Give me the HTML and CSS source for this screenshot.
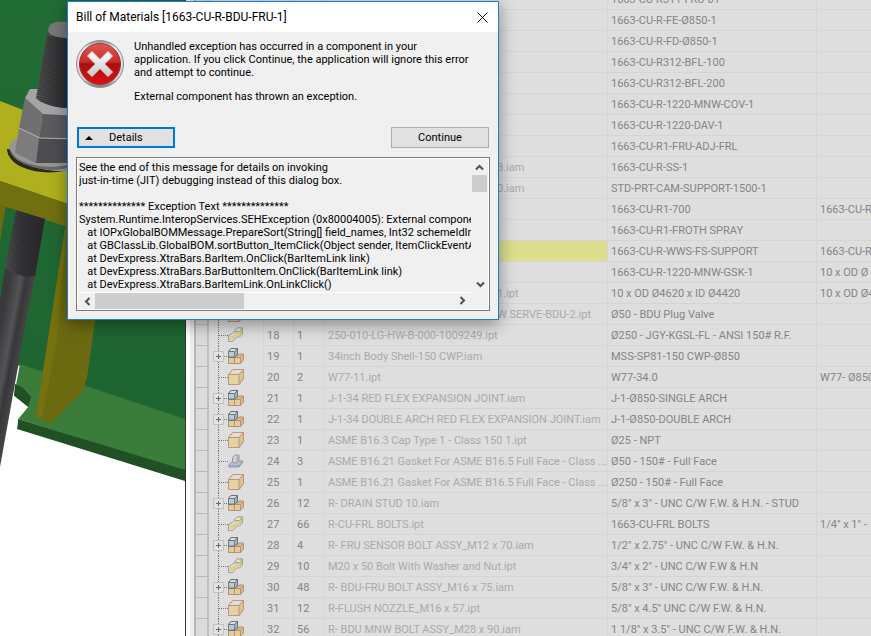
FILE: index.html
```html
<!DOCTYPE html>
<html lang="en">
<head>
    <meta charset="UTF-8">
    <title>Bill of Materials</title>
    <link rel="stylesheet" href="styles.css">
</head>

<body>

<!-- Tree icons -->
<svg class="sprites" aria-hidden="true">
    <symbol id="leaf" viewBox="0 0 19 21">
        <path d="M9.5 0V21M10 10.5H19" fill="none" stroke="#777" stroke-dasharray="1 1"/>
    </symbol>
    <symbol id="node" viewBox="0 0 19 21">
        <path d="M9.5 0V21M15 10.5H19" fill="none" stroke="#777" stroke-dasharray="1 1"/>
        <path d="M4.500 5.500h10v10h-10z" fill="#e2e2e2" stroke="#c0c0c0"/>
        <path d="M7 10.500h5M9.500 8v5" stroke="#666"/>
    </symbol>
    <symbol id="part" viewBox="0 0 16 16">
        <path d="M.5 5.500L5 .5h10.500v9L11 15.500H.5z" fill="#e6d3a4" stroke="#bd9580"/>
        <path d="M.5 5.500L5 .5h10.500L11 5.500z" fill="#e2dcd2" stroke="#bd9580"/>
        <path d="M11 5.500L15.500.5v9L11 15.500z" fill="#d9c68e" stroke="#bd9580"/>
    </symbol>
    <symbol id="assembly" viewBox="0 0 16 16">
        <path d="M9 8l2-2h4.500v6l-3 3.500H9z" fill="#d8bd88" stroke="#b98f79"/>
        <path d="M.5 9.500h6v6h-6zM6.500 9.500h6v6h-6z" fill="#e2cc98" stroke="#b98f79"/>
        <path d="M12.500 9.500L15.500 6.500M6.500 9.500L9.500 6.500" stroke="#b98f79"/>
        <path d="M.5 3.500L3 .5h6.500v6l-3 3h-6z" fill="#9fb2bf" stroke="#6d7275"/>
        <path d="M.5 3.500h6v5.500h-6z" fill="#b9cbd6" stroke="#777c80"/>
        <path d="M.5 3.500L3 .5h6.500l-3 3z" fill="#dcdfe0" stroke="#6d7275"/>
    </symbol>
    <symbol id="bolt" viewBox="0 0 16 16">
        <path d="M.5 8.500L6.500 5V3.500l3-2.500h5v6l-3 3H8.500L5 14.500H.5z" fill="#dfdfd8" stroke="#a0a097"/>
        <path d="M1.500 9H5v4H1.500zM7 5h4.500v4H7z" fill="#e2cf88"/>
        <path d="M11.500 5l2.500-3v4.500l-2.500 2.500zM5 9l2-1v2l-2 2z" fill="#cdc97b"/>
        <path d="M6.500 3.500L9.500 1h5l-3 3.500h-5z" fill="#e2e2de" stroke="#a0a097"/>
    </symbol>
    <symbol id="gasket" viewBox="0 0 16 16">
        <path d="M1 11.500L5 8h10l-4 5H1z" fill="#b5c3da" stroke="#8494b5"/>
        <path d="M1 12v2h10l4-5" fill="none" stroke="#8494b5"/>
        <path d="M4.500 9.500v-5L7 2h4v6l-2.500 2z" fill="#cfd0d2" stroke="#999"/>
        <path d="M8.500 10V4.500L11 2v6z" fill="#aaaeb3"/>
    </symbol>
    <symbol id="chevron" viewBox="0 0 9 9">
        <path d="M1 6.500L4.500 3L8 6.500" fill="none" stroke="#505050" stroke-width="2"/>
    </symbol>
</svg>

<main class="workspace">
    <section class="viewport" aria-label="Model view">
        <svg class="model" viewBox="0 0 185 636" preserveAspectRatio="xMinYMin slice">
            <defs>
                <linearGradient id="wall" x2="0" y2="1"><stop offset="0" stop-color="#226c35"/><stop offset="1" stop-color="#1e6430"/></linearGradient>
                <linearGradient id="steel"><stop offset="0" stop-color="#58585a"/><stop offset=".4" stop-color="#38383a"/><stop offset="1" stop-color="#29292b"/></linearGradient>
                <linearGradient id="rod" gradientUnits="userSpaceOnUse" x1="0" y1="330" x2="27" y2="335"><stop offset="0" stop-color="#39393b"/><stop offset=".4" stop-color="#545457"/><stop offset=".6" stop-color="#37373a"/><stop offset="1" stop-color="#4b4b4e"/></linearGradient>
                <pattern id="thread" width="4" height="2" patternUnits="userSpaceOnUse" patternTransform="rotate(12)"><path d="M0 .5H4" stroke="#1e1e20" stroke-opacity=".5"/></pattern>
            </defs>
            <path fill="#fff" d="M0 0H185V636H0z"/>
            <path fill="url(#wall)" d="M0 0H185V420L20 366L0 360z"/>
            <path fill="#3a7d3a" d="M20 364L185 419V471L18 419L28 407L14 396z"/>
            <path fill="#205023" d="M18 419L185 470V481L17 429zM15 384L22 387L31 397L28 407L14 396z"/>
            <path fill="#fff" d="M13 395L28 407L18 419L17 429L0 470V390z"/>
            <path fill="#6c6a10" d="M66 220L54 300L36 417L50 424L82 392L87 378L98 300V220z"/>
            <path fill="#75720f" d="M67 220L57 340L42 418L36 417L54 300z"/>
            <path fill="#6c6a10" d="M0 204H6L0 242z"/>
            <path fill="#b0b01e" d="M0 101L80 132V208L0 181z"/>
            <path fill="#717010" d="M0 181L80 208V231L0 205z"/>
            <!-- rod under the plate -->
            <path fill="url(#rod)" d="M5 268L35 276L30 300L0 467V300z"/>
            <path fill="url(#steel)" d="M16 210L45 219L35 276C25 278 12 274 5 268z"/>
            <path fill="url(#thread)" d="M16 210L45 219L35 276C25 278 12 274 5 268z"/>
            <!-- washer and nuts -->
            <path fill="#292a12" d="M7 149C8 168 40 176 64 171L60 156z"/>
            <path fill="#969698" d="M9 147C11 139 18 137 30 138H80V171C45 174 12 164 9 147z"/>
            <path fill="#68686a" d="M9 151C17 164 45 170 68 165V168C44 174 14 164 9 151z"/>
            <path fill="#707072" d="M25 98L43 114L39 138L19 128z"/>
            <path fill="#5b5b5e" d="M43 114H80V139L39 138z"/>
            <path fill="#a4a4a6" d="M25 98L30 89H80V116L43 114z"/>
            <path fill="#7c7c7e" d="M19 128L39 138L36 163L15 153z"/>
            <path fill="#4d4d50" d="M39 138H80V163L36 163z"/>
            <path fill="none" stroke="#b5b5b7" d="M19 128L40 138L80 139"/>
            <path fill="url(#steel)" d="M48 29L67 25H90V105C68 112 43 106 36 98z"/>
            <path fill="url(#thread)" d="M47 36H90V105C68 112 43 106 36 98z"/>
            <path fill="#77777a" d="M48 30C50 19 60 22 80 22V38C62 39 48 37 48 30z"/>
        </svg>
    </section>

    <section class="bom" aria-label="Bill of materials">
        <table class="bom-table">
            <colgroup>
                <col class="c-head"><col class="c-tree"><col class="c-item"><col class="c-qty"><col class="c-file"><col class="c-part"><col>
            </colgroup>
            <tbody>
                <tr><th></th><td></td><td></td><td></td><td></td><td>1663-CU-R311-FRU-01</td><td></td></tr>
                <tr><th></th><td></td><td></td><td></td><td></td><td>1663-CU-R-FE-Ø850-1</td><td></td></tr>
                <tr><th></th><td></td><td></td><td></td><td></td><td>1663-CU-R-FD-Ø850-1</td><td></td></tr>
                <tr><th></th><td></td><td></td><td></td><td></td><td>1663-CU-R312-BFL-100</td><td></td></tr>
                <tr><th></th><td></td><td></td><td></td><td></td><td>1663-CU-R312-BFL-200</td><td></td></tr>
                <tr><th></th><td></td><td></td><td></td><td></td><td>1663-CU-R-1220-MNW-COV-1</td><td></td></tr>
                <tr><th></th><td></td><td></td><td></td><td></td><td>1663-CU-R-1220-DAV-1</td><td></td></tr>
                <tr><th></th><td></td><td></td><td></td><td></td><td>1663-CU-R1-FRU-ADJ-FRL</td><td></td></tr>
                <tr><th></th><td></td><td></td><td></td><td class="tail">3.iam</td><td>1663-CU-R-SS-1</td><td></td></tr>
                <tr><th></th><td></td><td></td><td></td><td class="tail">0.iam</td><td>STD-PRT-CAM-SUPPORT-1500-1</td><td></td></tr>
                <tr><th></th><td></td><td></td><td></td><td></td><td>1663-CU-R1-700</td><td>1663-CU-R</td></tr>
                <tr><th></th><td></td><td></td><td></td><td></td><td>1663-CU-R1-FROTH SPRAY</td><td></td></tr>
                <tr><th></th><td></td><td></td><td></td><td class="marked"></td><td>1663-CU-R-WWS-FS-SUPPORT</td><td>1663-CU-R</td></tr>
                <tr><th></th><td></td><td></td><td></td><td></td><td>1663-CU-R-1220-MNW-GSK-1</td><td>10 x OD Ø</td></tr>
                <tr><th></th><td></td><td></td><td></td><td class="tail">1.ipt</td><td>10 x OD Ø4620 x ID Ø4420</td><td>10 x OD Ø4</td></tr>
                <tr><th></th><td><svg class="branch"><use href="#leaf"/></svg><svg class="icon"><use href="#part"/></svg></td><td></td><td></td><td class="tail">W SERVE-BDU-2.ipt</td><td>Ø50 - BDU Plug Valve</td><td></td></tr>
                <tr><th></th><td><svg class="branch"><use href="#leaf"/></svg><svg class="icon"><use href="#bolt"/></svg></td><td>18</td><td>1</td><td>250-010-LG-HW-B-000-1009249.ipt</td><td>Ø250 - JGY-KGSL-FL - ANSI 150# R.F.</td><td></td></tr>
                <tr><th></th><td><svg class="branch"><use href="#node"/></svg><svg class="icon"><use href="#assembly"/></svg></td><td>19</td><td>1</td><td>34inch Body Shell-150 CWP.iam</td><td>MSS-SP81-150 CWP-Ø850</td><td></td></tr>
                <tr><th></th><td><svg class="branch"><use href="#leaf"/></svg><svg class="icon"><use href="#part"/></svg></td><td>20</td><td>2</td><td>W77-11.ipt</td><td>W77-34.0</td><td>W77- Ø850</td></tr>
                <tr><th></th><td><svg class="branch"><use href="#node"/></svg><svg class="icon"><use href="#assembly"/></svg></td><td>21</td><td>1</td><td>J-1-34 RED FLEX EXPANSION JOINT.iam</td><td>J-1-Ø850-SINGLE ARCH</td><td></td></tr>
                <tr><th></th><td><svg class="branch"><use href="#node"/></svg><svg class="icon"><use href="#assembly"/></svg></td><td>22</td><td>1</td><td>J-1-34 DOUBLE ARCH RED FLEX EXPANSION JOINT.iam</td><td>J-1-Ø850-DOUBLE ARCH</td><td></td></tr>
                <tr><th></th><td><svg class="branch"><use href="#leaf"/></svg><svg class="icon"><use href="#part"/></svg></td><td>23</td><td>1</td><td>ASME B16.3 Cap Type 1 - Class 150 1.ipt</td><td>Ø25 - NPT</td><td></td></tr>
                <tr><th></th><td><svg class="branch"><use href="#leaf"/></svg><svg class="icon"><use href="#gasket"/></svg></td><td>24</td><td>3</td><td>ASME B16.21 Gasket For ASME B16.5 Full Face - Class ...</td><td>Ø50 - 150# - Full Face</td><td></td></tr>
                <tr><th></th><td><svg class="branch"><use href="#leaf"/></svg><svg class="icon"><use href="#part"/></svg></td><td>25</td><td>1</td><td>ASME B16.21 Gasket For ASME B16.5 Full Face - Class ...</td><td>Ø250 - 150# - Full Face</td><td></td></tr>
                <tr><th></th><td><svg class="branch"><use href="#node"/></svg><svg class="icon"><use href="#assembly"/></svg></td><td>26</td><td>12</td><td>R- DRAIN STUD 10.iam</td><td>5/8" x 3" - UNC C/W F.W. &amp; H.N. - STUD</td><td></td></tr>
                <tr><th></th><td><svg class="branch"><use href="#leaf"/></svg><svg class="icon"><use href="#bolt"/></svg></td><td>27</td><td>66</td><td>R-CU-FRL BOLTS.ipt</td><td>1663-CU-FRL BOLTS</td><td>1/4" x 1" -</td></tr>
                <tr><th></th><td><svg class="branch"><use href="#node"/></svg><svg class="icon"><use href="#assembly"/></svg></td><td>28</td><td>4</td><td>R- FRU SENSOR BOLT ASSY_M12 x 70.iam</td><td>1/2" x 2.75" - UNC C/W F.W. &amp; H.N.</td><td></td></tr>
                <tr><th></th><td><svg class="branch"><use href="#leaf"/></svg><svg class="icon"><use href="#bolt"/></svg></td><td>29</td><td>10</td><td>M20 x 50 Bolt With Washer and Nut.ipt</td><td>3/4" x 2" - UNC C/W F.W &amp; H.N</td><td></td></tr>
                <tr><th></th><td><svg class="branch"><use href="#node"/></svg><svg class="icon"><use href="#assembly"/></svg></td><td>30</td><td>48</td><td>R- BDU-FRU BOLT ASSY_M16 x 75.iam</td><td>5/8" x 3" - UNC C/W F.W. &amp; H.N.</td><td></td></tr>
                <tr><th></th><td><svg class="branch"><use href="#leaf"/></svg><svg class="icon"><use href="#part"/></svg></td><td>31</td><td>12</td><td>R-FLUSH NOZZLE_M16 x 57.ipt</td><td>5/8" x 4.5" UNC C/W F.W. &amp; H.N.</td><td></td></tr>
                <tr><th></th><td><svg class="branch"><use href="#node"/></svg><svg class="icon"><use href="#assembly"/></svg></td><td>32</td><td>56</td><td>R- BDU MNW BOLT ASSY_M28 x 90.iam</td><td>1 1/8" x 3.5" - UNC C/W F.W. &amp; H.N.</td><td></td></tr>
            </tbody>
        </table>
    </section>
</main>

<div class="dialog" role="dialog" aria-labelledby="dialog-title">
    <div class="titlebar">
        <h1 id="dialog-title">Bill of Materials [1663-CU-R-BDU-FRU-1]</h1>
        <button class="close" aria-label="Close">
            <svg viewBox="0 0 11 11"><path d="M.5.5l10 10M10.500.5l-10 10" stroke="#000" fill="none"/></svg>
        </button>
    </div>

    <div class="dialog-body">
        <div class="message">
            <svg class="error-icon" viewBox="0 0 48 48" aria-hidden="true">
                <defs>
                    <linearGradient id="rim" x2="0" y2="1"><stop offset="0" stop-color="#8c8c8c"/><stop offset=".15" stop-color="#e8e8e8"/><stop offset=".8" stop-color="#d4d4d4"/><stop offset="1" stop-color="#777"/></linearGradient>
                    <linearGradient id="red" x2="0" y2="1"><stop offset="0" stop-color="#e0584f"/><stop offset=".45" stop-color="#c72b29"/><stop offset=".5" stop-color="#a80f12"/><stop offset="1" stop-color="#dd1114"/></linearGradient>
                    <linearGradient id="cross" x2="0" y2="1"><stop offset="0" stop-color="#fff"/><stop offset="1" stop-color="#c9c9c9"/></linearGradient>
                </defs>
                <circle cx="24" cy="24" r="23.500" fill="url(#rim)" stroke="#909090"/>
                <circle cx="24" cy="24" r="20.500" fill="url(#red)" stroke="#a33"/>
                <path d="M16 11.500l8 8 8-8 4.500 4.500-8 8 8 8-4.500 4.500-8-8-8 8-4.500-4.500 8-8-8-8z" fill="url(#cross)" stroke="#e6dcdc" stroke-linejoin="round"/>
            </svg>
            <div class="message-text">
                <p>Unhandled exception has occurred in a component in your<br>application. If you click Continue, the application will ignore this error<br>and attempt to continue.</p>
                <p>External component has thrown an exception.</p>
            </div>
        </div>

        <div class="actions">
            <button class="btn btn-default">
                <svg viewBox="0 0 8 4"><path d="M0 4L4 0L8 4z"/></svg>
                <span>Details</span>
            </button>
            <button class="btn">Continue</button>
        </div>

        <div class="details">
            <textarea class="trace" aria-label="Exception details" wrap="off" readonly>See the end of this message for details on invoking
just-in-time (JIT) debugging instead of this dialog box.

************** Exception Text **************
System.Runtime.InteropServices.SEHException (0x80004005): External component
   at IOPxGlobalBOMMessage.PrepareSort(String[] field_names, Int32 schemeIdInde
   at GBClassLib.GlobalBOM.sortButton_ItemClick(Object sender, ItemClickEventArg
   at DevExpress.XtraBars.BarItem.OnClick(BarItemLink link)
   at DevExpress.XtraBars.BarButtonItem.OnClick(BarItemLink link)
   at DevExpress.XtraBars.BarItemLink.OnLinkClick()</textarea>
            <div class="scroll vertical">
                <button aria-label="Scroll up"><svg><use href="#chevron"/></svg></button>
                <div class="thumb"></div>
                <button class="down" aria-label="Scroll down"><svg><use href="#chevron"/></svg></button>
            </div>
            <div class="scroll horizontal">
                <button class="left" aria-label="Scroll left"><svg><use href="#chevron"/></svg></button>
                <div class="thumb"></div>
                <button class="right" aria-label="Scroll right"><svg><use href="#chevron"/></svg></button>
            </div>
        </div>
    </div>
</div>

</body>
</html>
```
FILE: styles.css
```css
* { margin: 0; padding: 0; box-sizing: border-box; }
body {
    font-family: Roboto, "Noto Sans", sans-serif; font-size: 11px;
    background: #fff; overflow: hidden;
}
svg { display: block; }
button { font: inherit; color: inherit; border: 0; background: none; }
.sprites { display: none; }

.workspace { display: grid; grid-template-columns: 186px 1fr; height: 100vh; }

/* Model view */
.viewport {
    overflow: hidden; border-right: 1px solid #333;
    background: #fff;
}
.model { width: 100%; height: 636px; }

/* Parts list */
.bom {
    overflow: hidden; background: #dedede;
    border-left: 4px solid #fff;
    box-shadow: inset 4px 0 #ececec, inset 6px 0 #b8b8b8;
    padding-left: 6px;
}
.bom-table {
    width: 100%; table-layout: fixed; border-collapse: separate; border-spacing: 0;
    margin-top: -11px; color: #858585;
}
.bom-table tr { height: 21px; }
.bom-table th {
    background: #dbdbdb;
    border-right: 2px solid #bfbfbf; border-bottom: 1px solid #bbb;
}
.bom-table td {
    height: 21px; padding: 2px 0 0 3px; line-height: 18px;
    border-right: 1px solid #d5d5d5; border-bottom: 1px solid #d5d5d5;
    white-space: nowrap; overflow: hidden;
}
.bom-table td:last-child { border-right: 0; }
.bom-table td:nth-child(2) { padding: 0; border-bottom: 0; line-height: 0; }
.bom-table td:nth-child(5) { color: #aaa; }
.bom-table .tail { padding-left: 172px; }
.bom-table .marked { background: #dede8e; }
.c-head { width: 13px; }
.c-tree { width: 55px; }
.c-item { width: 30px; }
.c-qty { width: 31px; }
.c-file { width: 283px; }
.c-part { width: 209px; }
.branch, .icon { display: inline-block; vertical-align: top; }
.branch { width: 19px; height: 21px; }
.icon { width: 16px; height: 16px; margin-top: 2px; }

/* Exception dialog */
.dialog {
    position: absolute; left: 67px; top: 1px; width: 432px;
    color: #000;
    background: #f0f0f0; border: 1px solid #1a7fd4;
    box-shadow: 0 4px 16px rgba(0,0,0,0.4);
}
.titlebar {
    display: flex; justify-content: space-between; align-items: center;
    height: 30px; padding-left: 8px; background: #fff;
}
.titlebar h1 { font-size: 12px; font-weight: 400; }
.close { padding: 10px; }
.close svg { width: 11px; height: 11px; }
.dialog-body { padding: 8px; }

.message { display: flex; gap: 10px; height: 87px; }
.error-icon { width: 48px; height: 48px; flex: none; }
.message-text { line-height: 13px; }
.message-text p + p { margin-top: 11px; }

.actions { display: flex; justify-content: space-between; padding: 0 1px; }
.btn {
    width: 98px; height: 21px; font-size: 11px;
    background: #e1e1e1; border: 1px solid #adadad;
}
.btn-default { display: flex; align-items: center; border: 2px solid #0078d7; padding-left: 6px; gap: 16px; }
.btn-default svg { width: 8px; height: 4px; }

.details {
    display: grid; grid-template-columns: 1fr 15px; grid-template-rows: 134px 16px;
    margin-top: 9px; padding: 1px 2px; gap: 0 1px;
    border: 1px solid #7a7a7a; background: #f0f0f0;
    box-shadow: inset 0 0 0 1px #fff;
}
.trace {
    display: block; width: 100%; height: 100%; border: 0; border-bottom: 1px solid #fff;
    padding: 2px 0; resize: none; outline: 0; overflow: hidden;
    font: 11px/13px Roboto, sans-serif;
    color: #000; background: #f0f0f0; white-space: pre;
}
.scroll { display: flex; background: #f0f0f0; }
.scroll button { width: 16px; height: 16px; padding: 3px; }
.scroll svg { width: 9px; height: 9px; }
.scroll .thumb { background: #cdcdcd; }
.vertical { flex-direction: column; }
.vertical .thumb { height: 17px; }
.vertical .down { margin-top: auto; transform: rotate(180deg); }
.horizontal .thumb { width: 149px; }
.horizontal .left { transform: rotate(-90deg); }
.horizontal .right { margin-left: auto; transform: rotate(90deg); }
```
